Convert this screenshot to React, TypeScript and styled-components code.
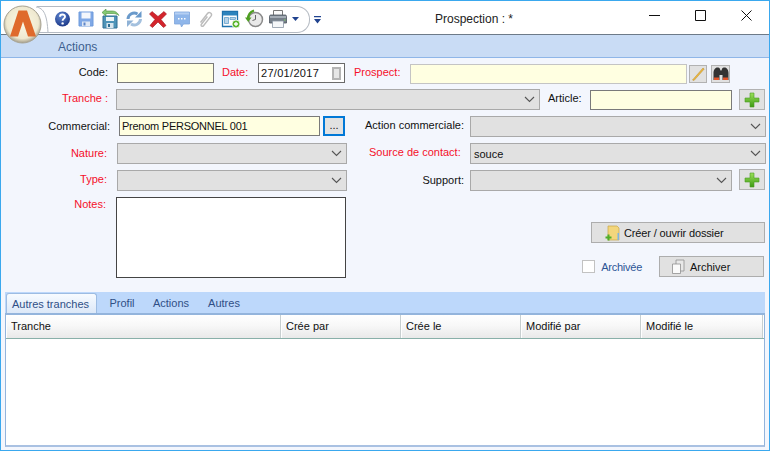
import styled, { createGlobalStyle } from "styled-components";

const GlobalStyle = createGlobalStyle`
	html, body {
		margin: 0;
		padding: 0;
		background: #f3f6fd;
	}
	* {
		box-sizing: border-box;
	}
`;

const Window = styled.div`
	position: relative;
	width: 770px;
	height: 451px;
	overflow: hidden;
	background: #f3f6fd;
	border: 1px solid #3aa8ee;
	font-family: "Liberation Sans", Arial, sans-serif;
	font-size: 11px;
	color: #111;
`;

const TitleBar = styled.div`
	display: flex;
	height: 34px;
	background: #fff;
	border-bottom: 1px solid #6d7a88;
`;

const QatArea = styled.div`
	display: flex;
	align-items: flex-start;
	width: 322px;
	padding: 5px 0 0 36px;
`;

const Qat = styled.div`
	position: relative;
	display: flex;
	align-items: center;
	width: 273px;
	height: 27px;
	padding: 0 0 2px 13px;
	border: 1px solid #b4bac2;
	border-left: none;
	border-radius: 0 13px 13px 0;
	background: #fff;
`;

const QatCurve = styled.svg`
	position: absolute;
	left: -1px;
	top: -1px;
`;

const QatIcon = styled.svg`
	flex: none;
	width: 24px;
	height: 20px;
`;

const PrintCaret = styled.svg`
	flex: none;
	margin-left: 2px;
`;

const Overflow = styled.svg`
	flex: none;
	margin: 10px 0 0 4px;
`;

const Logo = styled.svg`
	position: absolute;
	left: 2px;
	top: 4px;
`;

const Title = styled.div`
	flex: 1;
	padding: 11px 6px 0 0;
	text-align: center;
	font-size: 12px;
	color: #222;
`;

const Controls = styled.div`
	display: flex;
	width: 138px;
`;

const Control = styled.div`
	display: flex;
	align-items: flex-start;
	justify-content: center;
	width: 46px;
	padding-top: 9px;
`;

const Ribbon = styled.div`
	height: 23px;
	padding: 5px 0 0 57px;
	background: #c9dcf5;
	border-bottom: 1px solid #8fb6e8;
	color: #3c5f8f;
	font-size: 12px;
`;

const Form = styled.div`
	display: flex;
	flex-direction: column;
	gap: 6px;
	padding-top: 5px;
`;

const Row = styled.div<{ $h?: number }>`
	display: flex;
	align-items: flex-start;
	height: ${(p) => p.$h ?? 21}px;
`;

const Label = styled.label<{ $w: number; $ml?: number; $red?: boolean; $left?: boolean; $pt?: number }>`
	flex: none;
	width: ${(p) => p.$w}px;
	margin-left: ${(p) => p.$ml ?? 0}px;
	padding-top: ${(p) => p.$pt ?? 3}px;
	text-align: ${(p) => (p.$left ? "left" : "right")};
	white-space: nowrap;
	color: ${(p) => (p.$red ? "#f5102a" : "#111")};
`;

const TextInput = styled.div<{ $w: number; $ml: number; $top?: number; $light?: boolean; $h?: number }>`
	flex: none;
	width: ${(p) => p.$w}px;
	height: ${(p) => p.$h ?? 20}px;
	margin-left: ${(p) => p.$ml}px;
	margin-top: ${(p) => p.$top ?? 0}px;
	padding: 3px 0 0 2px;
	background: #ffffe1;
	border: 1px solid ${(p) => (p.$light ? "#c4c4c4" : "#7a7a7a")};
	white-space: nowrap;
`;

const SalesInput = styled(TextInput)`
	letter-spacing: -0.25px;
`;

const DateInput = styled(TextInput)`
	position: relative;
	background: #fff;
	border-color: #6a6a6a;
	letter-spacing: 0.3px;
`;

const DateButton = styled.span`
	position: absolute;
	right: 3px;
	top: 3px;
	width: 9px;
	height: 13px;
	background: #e6e6e6;
	border: 2px solid #b4b4b4;
`;

const Combo = styled.div<{ $w: number; $ml: number }>`
	flex: none;
	display: flex;
	align-items: center;
	width: ${(p) => p.$w}px;
	height: 21px;
	margin-left: ${(p) => p.$ml}px;
	padding-left: 3px;
	background: #e1e1e1;
	border: 1px solid #a9a9a9;
`;

const ComboValue = styled.span`
	flex: 1;
`;

const Chevron = styled.svg`
	flex: none;
	margin-right: 4px;
`;

const IconButton = styled.div<{ $w: number; $h: number; $ml: number; $top?: number }>`
	flex: none;
	display: flex;
	align-items: center;
	justify-content: center;
	width: ${(p) => p.$w}px;
	height: ${(p) => p.$h}px;
	margin-left: ${(p) => p.$ml}px;
	margin-top: ${(p) => p.$top ?? 0}px;
	background: #e1e1e1;
	border: 1px solid #b2b2b2;
`;

const DotsButton = styled.div`
	flex: none;
	width: 22px;
	height: 20px;
	margin-left: 3px;
	padding-top: 1px;
	text-align: center;
	background: #e1e1e1;
	border: 2px solid #0078d7;
`;

const NotesRow = styled.div`
	display: flex;
	align-items: flex-start;
	height: 81px;
`;

const Notes = styled.div`
	flex: none;
	width: 230px;
	height: 81px;
	margin-left: 10px;
	background: #fff;
	border: 1px solid #444;
`;

const Side = styled.div`
	display: flex;
	flex-direction: column;
	align-items: flex-end;
	gap: 13px;
	width: 419px;
	padding-top: 25px;
`;

const ArchiveRow = styled.div`
	display: flex;
	align-items: center;
	padding-right: 1px;
`;

const Check = styled.span`
	width: 13px;
	height: 13px;
	background: #fff;
	border: 1px solid #c2c2c2;
`;

const CheckLabel = styled.span`
	margin: 0 17px 0 6px;
	color: #2c5596;
	letter-spacing: -0.25px;
`;

const ActionButton = styled.div<{ $w: number }>`
	display: flex;
	align-items: center;
	width: ${(p) => p.$w}px;
	height: 21px;
	background: #e1e1e1;
	border: 1px solid #adadad;
`;

const ActionIcon = styled.svg<{ $ml: number; $mr: number }>`
	flex: none;
	margin: 0 ${(p) => p.$mr}px 0 ${(p) => p.$ml}px;
`;

const ActionText = styled.span<{ $tight?: boolean }>`
	letter-spacing: ${(p) => (p.$tight ? "-0.15px" : "0")};
`;

const TabStrip = styled.div`
	display: flex;
	align-items: flex-end;
	height: 21px;
	margin: 14px 4px 0 4px;
	padding-left: 1px;
	background: #bdd8fb;
`;

const Tab = styled.div<{ $active?: boolean; $w: number; $ml?: number }>`
	width: ${(p) => p.$w}px;
	height: 20px;
	margin-left: ${(p) => p.$ml ?? 0}px;
	padding-top: 4px;
	padding-right: ${(p) => (p.$active ? 2 : 0)}px;
	text-align: center;
	color: #2f4f86;
	${(p) =>
		p.$active &&
		`
		background: linear-gradient(#f7fbff, #dce8f8);
		border: 1px solid #9dbce2;
		border-bottom: none;
		border-radius: 3px 3px 0 0;
	`}
`;

const Grid = styled.div`
	height: 134px;
	margin: 0 4px;
	background: #fff;
	border: 1px solid #93b4dc;
	border-bottom: 2px solid #a9c1e2;
	border-top-width: 2px;
`;

const HeaderRow = styled.div`
	display: flex;
	height: 24px;
	border-bottom: 1px solid #89b0a9;
`;

const HeaderCell = styled.div<{ $w: number }>`
	flex: none;
	width: ${(p) => p.$w}px;
	padding: 5px 0 0 4px;
	background: linear-gradient(#ffffff, #f8f8f8 45%, #e9e9e9);
	border-right: 1px solid #c8cfd0;
	border-left: 1px solid #fff;
`;

const Caret = () => (
	<Chevron width="11" height="7" viewBox="0 0 11 7">
		<path d="M1 1l4.5 4.5L10 1" fill="none" stroke="#555" strokeWidth="1.1" />
	</Chevron>
);

const Plus = () => (
	<svg width="16" height="16" viewBox="0 0 16 16">
		<defs>
			<linearGradient id="plusg" x1="0" y1="0" x2="0" y2="1">
				<stop offset="0" stopColor="#9be05a" />
				<stop offset="1" stopColor="#3d9a12" />
			</linearGradient>
		</defs>
		<path d="M6 1h4v5h5v4h-5v5H6v-5H1V6h5z" fill="url(#plusg)" stroke="#4c9a24" strokeWidth=".6" />
	</svg>
);

const columns = [
	{ name: "Tranche", w: 275 },
	{ name: "Crée par", w: 120 },
	{ name: "Crée le", w: 120 },
	{ name: "Modifié par", w: 120 },
	{ name: "Modifié le", w: 122 },
];

function App() {
	return (
		<Window>
			<GlobalStyle />
			<TitleBar>
				<QatArea>
					<Qat>
						<QatCurve width="16" height="28" viewBox="0 0 16 28">
							<path d="M0 1C8 2 11 9 12 26.5" fill="none" stroke="#b4bac2" />
							<path d="M12 26.5h4" fill="none" stroke="#b4bac2" />
						</QatCurve>
						{/* help */}
						<QatIcon viewBox="0 0 24 20">
							<defs>
								<radialGradient id="helpg" cx=".4" cy=".3" r=".8">
									<stop offset="0" stopColor="#5f86d0" />
									<stop offset="1" stopColor="#142f80" />
								</radialGradient>
							</defs>
							<circle cx="12.5" cy="10" r="7.5" fill="url(#helpg)" />
							<path d="M10 7.8c0-3 5-3 5 -.1c0 1.900-2.400 1.800-2.400 4" fill="none" stroke="#fff" strokeWidth="1.900" />
							<circle cx="12.600" cy="14.400" r="1.200" fill="#fff" />
						</QatIcon>
						{/* save */}
						<QatIcon viewBox="0 0 24 20">
							<path d="M5 3h14v14H5z" fill="#7fa8e6" stroke="#6f9bdc" />
							<path d="M7.500 3.500h9v6h-9z" fill="#f4f7fc" />
							<path d="M8 12.500h8v4.500H8z" fill="#dfe8f5" />
							<path d="M9.500 13.500h2v3h-2z" fill="#5d86c8" />
						</QatIcon>
						{/* save and close */}
						<QatIcon viewBox="0 0 24 20">
							<path d="M5 7h14v12H5z" fill="#4f94b8" stroke="#2e6f94" />
							<path d="M8 8h8v4H8z" fill="#eef6f8" />
							<path d="M8.500 14h7v5h-7z" fill="#d8e6ee" />
							<path d="M10 15h2v3h-2z" fill="#2e6f94" />
							<path d="M4 3.500L8 0v2h6c3 0 5 1 7 4.500-2-1.500-4-2-7-2H8V7z" fill="#84c874" stroke="#4a8f3c" strokeWidth=".6" />
						</QatIcon>
						{/* refresh */}
						<QatIcon viewBox="0 0 24 20">
							<path d="M6 10a6.200 6.200 0 0 1 9.500-5" fill="none" stroke="#6a9acb" strokeWidth="3" />
							<path d="M13 8.500h6.500V2z" fill="#6a9acb" />
							<path d="M18.500 10a6.200 6.200 0 0 1-9.500 5" fill="none" stroke="#a3c0de" strokeWidth="3" />
							<path d="M11.500 11.500H5V18z" fill="#8fb2d6" />
						</QatIcon>
						{/* delete */}
						<QatIcon viewBox="0 0 24 20">
							<path d="M6 2.500l6 5 6-5 2.500 2.500-5.500 5.500 5 6-2.500 2-5.500-5.500-5.500 5.500-2.500-2 5-6L3.500 5z" fill="#d3242c" stroke="#a5181f" strokeWidth=".6" />
						</QatIcon>
						{/* comment */}
						<QatIcon viewBox="0 0 24 20">
							<path d="M4.500 3h15v12h-6l-2 3-1-3h-6z" fill="#8fb6ea" stroke="#7ea5da" strokeWidth=".8" />
							<path d="M5 3.500h14v2H5z" fill="#b5cff2" />
							<path d="M8 9h1.500v1.500H8zM11 9h1.500v1.500H11zM14 9h1.500v1.500H14z" fill="#fff" />
						</QatIcon>
						{/* attachment */}
						<QatIcon viewBox="0 0 24 20">
							<path d="M6.500 13l7-9c1.800-2.300 5.300 0 3.500 2.600l-7.500 9.600c-1.100 1.400-3.200.1-2.100-1.500l6-7.700" fill="none" stroke="#bcbcbc" strokeWidth="1.400" transform="translate(0 .5)" />
						</QatIcon>
						{/* new window */}
						<QatIcon viewBox="0 0 24 20">
							<path d="M4.500 2.500h15v15h-15z" fill="#fdfdfd" stroke="#1f72ad" strokeWidth="1.300" />
							<path d="M5 3h14v3.500H5z" fill="#2c83bd" />
							<path d="M6.500 8.500h4v6h-4zM12 8.500h5.500v2H12z" fill="#b8d4ea" stroke="#3d8ac0" strokeWidth=".6" />
							<circle cx="18" cy="15" r="4" fill="#5bb52e" stroke="#fff" strokeWidth=".8" />
							<path d="M16 15h4M18 13v4" stroke="#fff" strokeWidth="1.300" />
						</QatIcon>
						{/* history */}
						<QatIcon viewBox="0 0 24 20">
							<circle cx="13.500" cy="10.500" r="7" fill="#e9e9e9" stroke="#8a8a8a" strokeWidth="1.500" />
							<path d="M13.500 6v4.500l-3 1" fill="none" stroke="#666" />
							<path d="M6 10c0-4 2-7 6-8.500" fill="none" stroke="#4e9f20" strokeWidth="2.400" />
							<path d="M3 8.500l3.200 4.500 3.300-4.500z" fill="#4e9f20" />
						</QatIcon>
						{/* print */}
						<QatIcon viewBox="0 0 24 20">
							<path d="M7.500 1.500h9v5h-9z" fill="#fafafa" stroke="#777" />
							<path d="M5 6h14c1 0 1.500.5 1.500 1.500V14h-17V7.500C3.500 6.500 4 6 5 6z" fill="#77808a" stroke="#4e5660" strokeWidth=".8" />
							<path d="M4 7h16v2H4z" fill="#a4acb5" />
							<path d="M6.500 12h11v6.500h-11z" fill="#f5f7f9" stroke="#8a97a4" strokeWidth=".8" />
							<path d="M18 10.500h1.500v1H18z" fill="#79d060" />
						</QatIcon>
						<PrintCaret width="7" height="4" viewBox="0 0 7 4">
							<path d="M0 0h7L3.500 4z" fill="#20438f" />
						</PrintCaret>
					</Qat>
					<Overflow width="7" height="8" viewBox="0 0 7 8">
						<path d="M0 0h7v1.300H0zM0 3h7L3.500 7.500z" fill="#20438f" />
					</Overflow>
				</QatArea>
				<Title>Prospection : *</Title>
				<Controls>
					<Control>
						<svg width="11" height="11" viewBox="0 0 11 11">
							<path d="M0 5.500h11" stroke="#111" />
						</svg>
					</Control>
					<Control>
						<svg width="11" height="11" viewBox="0 0 11 11">
							<path d="M.5.500h10v10H.5z" fill="none" stroke="#111" />
						</svg>
					</Control>
					<Control>
						<svg width="11" height="11" viewBox="0 0 11 11">
							<path d="M.5.500l10 10M10.500.500l-10 10" fill="none" stroke="#111" />
						</svg>
					</Control>
				</Controls>
			</TitleBar>
			<Logo width="40" height="40" viewBox="0 0 40 40">
				<defs>
					<radialGradient id="logog" cx=".5" cy=".45" r=".55">
						<stop offset="0" stopColor="#fbf9e6" />
						<stop offset=".78" stopColor="#efe9d0" />
						<stop offset="1" stopColor="#a39c88" />
					</radialGradient>
				</defs>
				<circle cx="19.500" cy="19.500" r="18.500" fill="url(#logog)" stroke="#a8a494" />
				<path d="M15.500 5.500h8.500L33 31.500h-8L20 16.500 15 31.500H7z" fill="#df6a2c" />
			</Logo>
			<Ribbon>Actions</Ribbon>
			<Form>
				<Row $h={20}>
					<Label $w={107}>Code:</Label>
					<TextInput $w={97} $ml={9} />
					<Label $w={27} $ml={8} $red $left>Date:</Label>
					<DateInput $w={87} $ml={9}>
						27/01/2017
						<DateButton />
					</DateInput>
					<Label $w={46} $ml={9} $red $left>Prospect:</Label>
					<TextInput $w={277} $ml={10} $top={1} $light />
					<IconButton $w={18} $h={18} $ml={2} $top={2}>
						<svg width="14" height="14" viewBox="0 0 14 14">
							<path d="M1.500 13L12 1l1.200 1L3 13.500z" fill="#eeb93e" stroke="#b98a2a" strokeWidth=".5" />
						</svg>
					</IconButton>
					<IconButton $w={19} $h={18} $ml={4} $top={2}>
						<svg width="16" height="15" viewBox="0 0 16 15">
							<path d="M.500 13V6C.500 3 2 .500 4.500.500S7 2 7.500 3.500h1C9 2 9 .500 11.500.500S15.500 3 15.500 6v7h-6V8h-3v5z" fill="#333" />
							<path d="M1 10.500h5V13H1zM10 10.500h5V13h-5z" fill="#e2542a" />
						</svg>
					</IconButton>
				</Row>
				<Row>
					<Label $w={107} $red>Tranche :</Label>
					<Combo $w={424} $ml={8}>
						<ComboValue />
						<Caret />
					</Combo>
					<Label $w={32} $ml={8} $left>Article:</Label>
					<TextInput $w={142} $ml={10} $top={1} />
					<IconButton $w={26} $h={21} $ml={7}>
						<Plus />
					</IconButton>
				</Row>
				<Row>
					<Label $w={109} $pt={4}>Commercial:</Label>
					<SalesInput $w={201} $ml={9}>Prenom PERSONNEL 001</SalesInput>
					<DotsButton>...</DotsButton>
					<Label $w={95} $ml={20} $left>Action commerciale:</Label>
					<Combo $w={296} $ml={10}>
						<ComboValue />
						<Caret />
					</Combo>
				</Row>
				<Row>
					<Label $w={106} $red $pt={4}>Nature:</Label>
					<Combo $w={230} $ml={10}>
						<ComboValue />
						<Caret />
					</Combo>
					<Label $w={91} $ml={22} $red $left>Source de contact:</Label>
					<Combo $w={296} $ml={10}>
						<ComboValue>souce</ComboValue>
						<Caret />
					</Combo>
				</Row>
				<Row>
					<Label $w={106} $red>Type:</Label>
					<Combo $w={230} $ml={10}>
						<ComboValue />
						<Caret />
					</Combo>
					<Label $w={117} $pt={4}>Support:</Label>
					<Combo $w={262} $ml={6}>
						<ComboValue />
						<Caret />
					</Combo>
					<IconButton $w={26} $h={21} $ml={7} $top={-1}>
						<Plus />
					</IconButton>
				</Row>
				<NotesRow>
					<Label $w={105} $red $pt={1}>Notes:</Label>
					<Notes />
					<Side>
						<ActionButton $w={174}>
							<ActionIcon $ml={13} $mr={3} width="16" height="16" viewBox="0 0 16 16">
								<path d="M3 1h9l2 2v12H3z" fill="#f3d67c" stroke="#c9a746" strokeWidth=".7" />
								<path d="M12.500 8h1.500v7h-1.500z" fill="#7fb4e0" />
								<path d="M2.500 9.500h2v2h2v2h-2v2h-2v-2h-2v-2h2z" fill="#4fae2a" />
							</ActionIcon>
							<ActionText $tight>Créer / ouvrir dossier</ActionText>
						</ActionButton>
						<ArchiveRow>
							<Check />
							<CheckLabel>Archivée</CheckLabel>
							<ActionButton $w={105}>
								<ActionIcon $ml={11} $mr={4} width="15" height="15" viewBox="0 0 15 15">
									<path d="M5 1h8v11H5z" fill="#e8e8e8" stroke="#8f8f8f" strokeWidth=".8" />
									<path d="M1.500 5h8v9.500h-8z" fill="#fafafa" stroke="#8f8f8f" strokeWidth=".8" />
								</ActionIcon>
								<ActionText>Archiver</ActionText>
							</ActionButton>
						</ArchiveRow>
					</Side>
				</NotesRow>
			</Form>
			<TabStrip>
				<Tab $active $w={91}>Autres tranches</Tab>
				<Tab $w={38} $ml={6}>Profil</Tab>
				<Tab $w={52} $ml={4}>Actions</Tab>
				<Tab $w={46} $ml={4}>Autres</Tab>
			</TabStrip>
			<Grid>
				<HeaderRow>
					{columns.map((c) => (
						<HeaderCell key={c.name} $w={c.w}>{c.name}</HeaderCell>
					))}
				</HeaderRow>
			</Grid>
		</Window>
	);
}

export default App;
